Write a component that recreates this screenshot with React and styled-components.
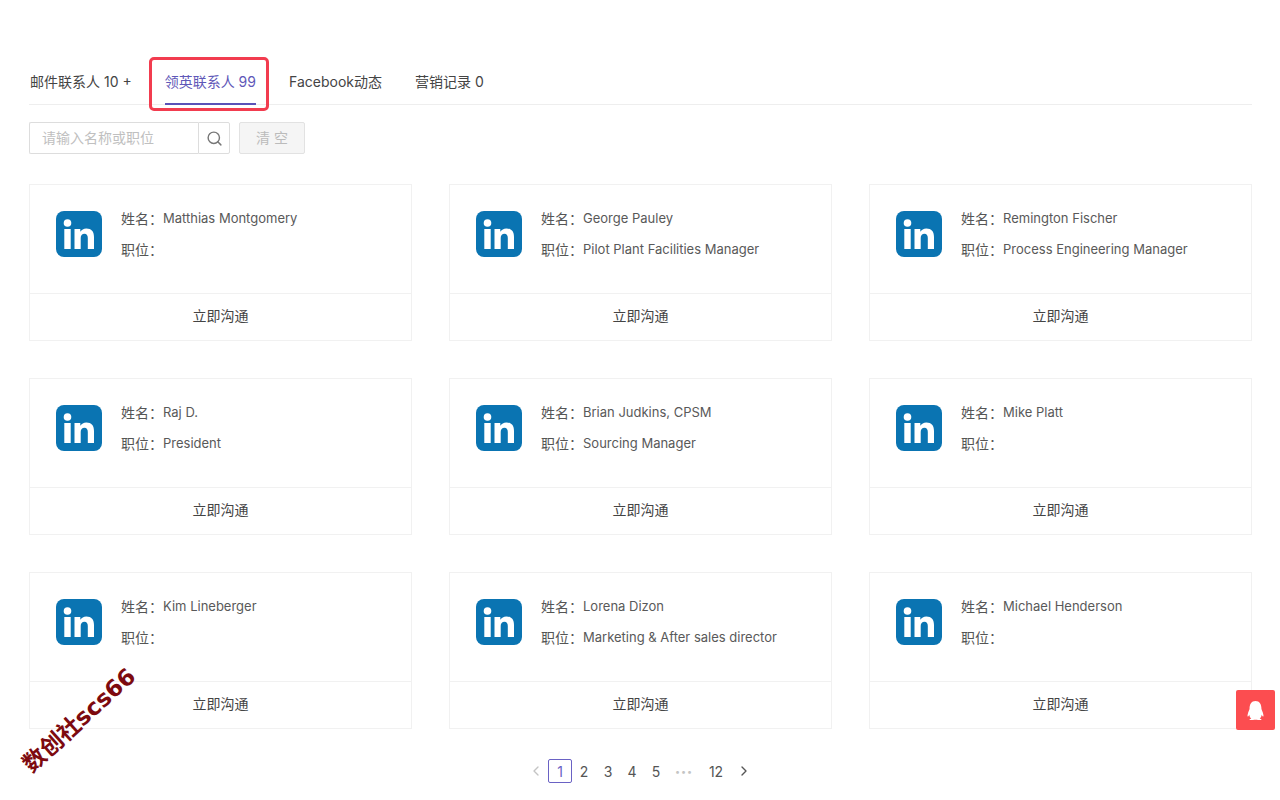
import styled, { createGlobalStyle } from "styled-components";
import { FaQq } from "react-icons/fa";
import { LuSearch, LuChevronLeft, LuChevronRight } from "react-icons/lu";

const contacts = [
  { name: "Matthias Montgomery", title: "" },
  { name: "George Pauley", title: "Pilot Plant Facilities Manager" },
  { name: "Remington Fischer", title: "Process Engineering Manager" },
  { name: "Raj D.", title: "President" },
  { name: "Brian Judkins, CPSM", title: "Sourcing Manager" },
  { name: "Mike Platt", title: "" },
  { name: "Kim Lineberger", title: "" },
  { name: "Lorena Dizon", title: "Marketing & After sales director" },
  { name: "Michael Henderson", title: "" },
];

const tabs = [
  { label: "邮件联系人 10 +" },
  { label: "领英联系人 99", active: true },
  { label: "Facebook动态" },
  { label: "营销记录 0" },
];

function LinkedInLogo() {
  return (
    <svg width="46" height="46" viewBox="0 0 46 46">
      <rect width="46" height="46" rx="8" fill="#0a74b2" />
      <circle cx="11.5" cy="12" r="3.8" fill="#fff" />
      <rect x="8.3" y="18" width="6.4" height="20" fill="#fff" />
      <path
        d="M18.5 18h5.8v2.8c1.2-2 3.4-3.3 6-3.3 5.2 0 7.7 3 7.7 8.4V38h-6.2V27c0-2.7-1-4.3-3.3-4.3-2.5 0-3.8 1.8-3.8 4.4V38h-6.2z"
        fill="#fff"
      />
    </svg>
  );
}

function ContactCard({ contact }) {
  return (
    <Card>
      <CardBody>
        <LinkedInLogo />
        <Details>
          <DetailRow>
            <DetailLabel>姓名：</DetailLabel>
            <DetailValue>{contact.name}</DetailValue>
          </DetailRow>
          <DetailRow>
            <DetailLabel>职位：</DetailLabel>
            <DetailValue>{contact.title}</DetailValue>
          </DetailRow>
        </Details>
      </CardBody>
      <CardFooter>立即沟通</CardFooter>
    </Card>
  );
}

export default function App() {
  return (
    <Page>
      <GlobalStyle />
      <TabBar>
        {tabs.map((tab) => (
          <Tab key={tab.label} $active={tab.active}>
            {tab.label}
            {tab.active && <TabHighlight />}
          </Tab>
        ))}
      </TabBar>

      <Toolbar>
        <SearchInput>请输入名称或职位</SearchInput>
        <SearchButton>
          <LuSearch />
        </SearchButton>
        <ClearButton>清 空</ClearButton>
      </Toolbar>

      <CardGrid>
        {contacts.map((contact) => (
          <ContactCard key={contact.name} contact={contact} />
        ))}
      </CardGrid>

      <Pagination>
        <PageArrow $disabled>
          <LuChevronLeft />
        </PageArrow>
        <PageItem $active>1</PageItem>
        <PageItem>2</PageItem>
        <PageItem>3</PageItem>
        <PageItem>4</PageItem>
        <PageItem>5</PageItem>
        <PageDots>•••</PageDots>
        <PageItem $wide>12</PageItem>
        <PageArrow>
          <LuChevronRight />
        </PageArrow>
      </Pagination>

      <Watermark>数创社scs66</Watermark>
      <QqButton>
        <FaQq />
      </QqButton>
    </Page>
  );
}

const GlobalStyle = createGlobalStyle`
  body {
    margin: 0;
    background-color: #ffffff;
    font-family: "Inter", "Noto Sans CJK SC", sans-serif;
  }
`;

const Page = styled.div`
  width: 1280px;
  height: 800px;
  padding: 60px 28px 0 29px;

  position: relative;
  box-sizing: border-box;
  overflow: hidden;
`;

const TabBar = styled.div`
  height: 45px;
  padding-left: 1px;

  display: flex;
  gap: 33px;

  box-sizing: border-box;
  border-bottom: 1px solid #eeeeee;
`;

const Tab = styled.div`
  height: 45px;
  padding-top: 13px;

  position: relative;
  box-sizing: border-box;

  border-bottom: 2px solid ${({ $active }) => ($active ? "#5a52b8" : "transparent")};

  color: ${({ $active }) => ($active ? "#5f58b8" : "#444444")};
  font-size: 14px;
  line-height: 18px;
  white-space: nowrap;
`;

const TabHighlight = styled.div`
  position: absolute;
  top: -3px;
  left: -16px;
  right: -13px;
  bottom: -8px;

  border: 3px solid #f23c4f;
  border-radius: 5px;
`;

const Toolbar = styled.div`
  margin-top: 17px;

  display: flex;
`;

const SearchInput = styled.div`
  width: 169px;
  height: 32px;
  padding: 0 0 2px 12px;

  display: flex;
  align-items: center;

  box-sizing: border-box;
  border: 1px solid #dddddd;
  border-right: none;
  border-radius: 2px 0 0 2px;

  color: #c0c0c0;
  font-size: 14px;
`;

const SearchButton = styled.div`
  width: 32px;
  height: 32px;

  display: flex;
  align-items: center;
  justify-content: center;

  box-sizing: border-box;
  border: 1px solid #dddddd;
  border-radius: 0 2px 2px 0;

  color: #777777;
  font-size: 17px;
`;

const ClearButton = styled.div`
  width: 66px;
  height: 32px;
  margin-left: 9px;
  padding-bottom: 2px;

  display: flex;
  align-items: center;
  justify-content: center;

  box-sizing: border-box;
  border: 1px solid #e2e2e2;
  border-radius: 2px;
  background-color: #f5f5f5;

  color: #bbbbbb;
  font-size: 14px;
  white-space: pre;
`;

const CardGrid = styled.div`
  margin-top: 30px;

  display: grid;
  grid-template-columns: repeat(3, 383px);
  column-gap: 37px;
  row-gap: 37px;
`;

const Card = styled.div`
  height: 157px;

  display: flex;
  flex-direction: column;

  box-sizing: border-box;
  border: 1px solid #f1f1f1;
`;

const CardBody = styled.div`
  height: 109px;
  padding: 26px 0 0 26px;

  display: flex;
  gap: 19px;

  box-sizing: border-box;
  border-bottom: 1px solid #f1f1f1;
`;

const Details = styled.div`
  margin-top: -3px;

  display: flex;
  flex-direction: column;
  gap: 11px;
`;

const DetailRow = styled.div`
  height: 20px;

  display: flex;
  align-items: center;
`;

const DetailLabel = styled.span`
  width: 42px;
  flex-shrink: 0;

  color: #555555;
  font-size: 14px;
`;

const DetailValue = styled.span`
  color: #595959;
  font-size: 13px;
  white-space: nowrap;
`;

const CardFooter = styled.div`
  flex: 1;
  padding-bottom: 4px;

  display: flex;
  align-items: center;
  justify-content: center;

  color: #444444;
  font-size: 14px;
`;

const Pagination = styled.div`
  margin-top: 30px;
  padding-right: 1px;

  display: flex;
  align-items: center;
  justify-content: center;

  font-size: 14px;
`;

const PageItem = styled.div`
  width: ${({ $wide }) => ($wide ? "32px" : "24px")};
  height: 24px;

  display: flex;
  align-items: center;
  justify-content: center;

  box-sizing: border-box;
  border: 1px solid ${({ $active }) => ($active ? "#6a62c4" : "transparent")};
  border-radius: 2px;

  color: ${({ $active }) => ($active ? "#6a62c4" : "#555555")};
`;

const PageArrow = styled(PageItem)`
  color: ${({ $disabled }) => ($disabled ? "#c4c4c4" : "#555555")};
  font-size: 16px;
`;

const PageDots = styled.div`
  width: 32px;

  color: #c4c4c4;
  font-size: 9px;
  letter-spacing: 1px;
  text-align: center;
`;

const Watermark = styled.div`
  position: absolute;
  left: 8px;
  top: 706px;

  transform: rotate(-42deg);

  color: #7d0a0f;
  font-family: "DejaVu Sans", "Noto Sans CJK SC", sans-serif;
  font-size: 23px;
  font-weight: 700;
  line-height: 28px;
  white-space: nowrap;
`;

const QqButton = styled.div`
  width: 39px;
  height: 40px;

  position: absolute;
  left: 1236px;
  top: 690px;

  display: flex;
  align-items: center;
  justify-content: center;

  border-radius: 2px;
  background-color: #fc4d50;

  color: #ffffff;
  font-size: 19px;
`;
